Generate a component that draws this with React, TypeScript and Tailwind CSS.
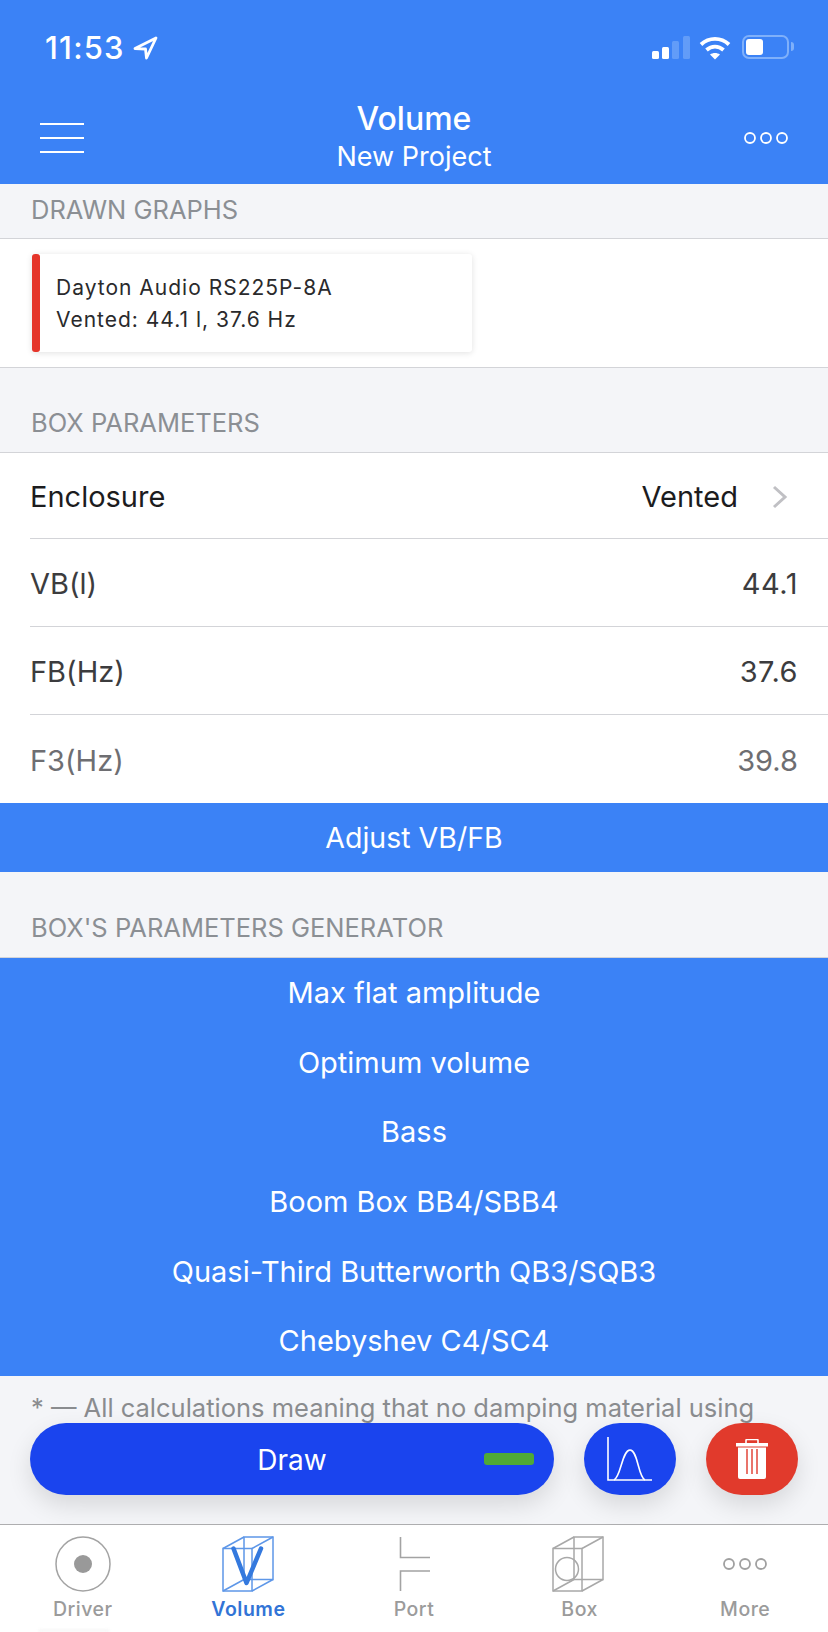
const generators = [
  "Max flat amplitude",
  "Optimum volume",
  "Bass",
  "Boom Box BB4/SBB4",
  "Quasi-Third Butterworth QB3/SQB3",
  "Chebyshev C4/SC4",
];

const params = [
  { label: "VB(l)", value: "44.1", color: "text-[#3c3c3e]" },
  { label: "FB(Hz)", value: "37.6", color: "text-[#3c3c3e]" },
];

function StatusBar() {
  return (
    <div className="flex h-[100px] items-start justify-between pl-[45px] pr-[34px] pt-[33px]">
      <div className="flex items-center gap-[8px]">
        <span className="text-[31px] leading-[30px] font-medium tracking-[1.2px]">11:53</span>
        <svg width="25" height="24" viewBox="0 0 25 24" fill="none" stroke="white" strokeWidth="2.8" strokeLinejoin="round">
          <path d="M23 2 L2 12.5 L12.5 13 L13.5 22 Z" />
        </svg>
      </div>
      <div className="flex items-center">
        <svg width="38" height="24" viewBox="0 0 38 24" className="mr-[9px] mt-[3px]">
          <rect x="0" y="15" width="7" height="8" rx="1.5" fill="white" />
          <rect x="10" y="11" width="7" height="12" rx="1.5" fill="white" />
          <rect x="20" y="5" width="7" height="18" rx="1.5" fill="#629cf8" />
          <rect x="31" y="0" width="7" height="23" rx="1.5" fill="#629cf8" />
        </svg>
        <svg width="32" height="24" viewBox="0 0 32 24" fill="none" stroke="white" strokeWidth="3.8" className="mr-[11px] mt-[2px]">
          <path d="M2 8.5 C10 1 22 1 30 8.5" />
          <path d="M7.5 14 C12.5 9.5 19.5 9.5 24.5 14" />
          <path d="M16 23.5 L11 18.5 C14 16.5 18 16.5 21 18.5 Z" fill="white" stroke="none" />
        </svg>
        <div className="flex items-center">
          <div className="flex h-[24px] w-[47px] items-center rounded-[7px] border-2 border-[#7fb0fa] p-[2px]">
            <div className="h-full w-[17px] rounded-[3px] bg-white" />
          </div>
          <div className="ml-[2px] h-[9px] w-[3px] rounded-r-[3px] bg-[#7fb0fa]" />
        </div>
      </div>
    </div>
  );
}

function NavBar() {
  return (
    <div className="flex items-center justify-between pl-[40px] pr-[40px]">
      <div className="flex w-[44px] flex-col gap-[12px]">
        <div className="h-[2px] bg-white" />
        <div className="h-[2px] bg-white" />
        <div className="h-[2px] bg-white" />
      </div>
      <div className="flex flex-col items-center">
        <div className="text-[32px] leading-[37px] font-medium">Volume</div>
        <div className="text-[27px] leading-[39px]">New Project</div>
      </div>
      <MoreDots color="white" />
    </div>
  );
}

function MoreDots({ color }: { color: string }) {
  return (
    <svg width="44" height="12" viewBox="0 0 44 12" fill="none" stroke={color} strokeWidth="1.8">
      <circle cx="6" cy="6" r="5" />
      <circle cx="22" cy="6" r="5" />
      <circle cx="38" cy="6" r="5" />
    </svg>
  );
}

function SectionLabel({ children, className }: { children: string; className: string }) {
  return (
    <div className={`flex items-end border-b border-[#d3d4d8] bg-[#f4f5f8] pl-[31px] text-[25.5px] text-[#8b8f94] ${className}`}>
      {children}
    </div>
  );
}

function Row({ label, value, color }: { label: string; value: string; color: string }) {
  return (
    <div className="ml-[30px] flex h-[88px] items-center justify-between border-b border-[#d3d4d8] pr-[30px] pt-[3px] text-[29px]">
      <span className={color}>{label}</span>
      <span className={`tracking-[0.5px] ${color}`}>{value}</span>
    </div>
  );
}

function DriverIcon() {
  return (
    <svg width="56" height="56" viewBox="0 0 56 56" fill="none">
      <circle cx="28" cy="28" r="27" stroke="#a3a3a3" strokeWidth="1.5" />
      <circle cx="28" cy="28" r="9" fill="#999999" />
    </svg>
  );
}

function VolumeIcon() {
  return (
    <svg width="52" height="56" viewBox="0 0 52 56" fill="none" stroke="#5e97e8" strokeWidth="1.5">
      <rect x="1" y="12.5" width="29" height="42.5" />
      <rect x="22" y="1" width="29" height="42.5" />
      <path d="M1 12.5 L22 1 M30 12.5 L51 1 M1 55 L22 43.5 M30 55 L51 43.5" />
      <path d="M11.5 12.5 L24.5 47 L39 12.5" strokeWidth="4.5" strokeLinecap="round" strokeLinejoin="round" stroke="#3479de" />
    </svg>
  );
}

function PortIcon() {
  return (
    <svg width="32" height="56" viewBox="0 0 32 56" fill="none" stroke="#a3a3a3" strokeWidth="1.6" className="ml-[3px]">
      <path d="M1.5 1 V21.5 H31" />
      <path d="M1.5 55 V35 H31" />
    </svg>
  );
}

function BoxIcon() {
  return (
    <svg width="52" height="56" viewBox="0 0 52 56" fill="none" stroke="#a8a8a8" strokeWidth="1.5" className="mr-[3px]">
      <rect x="1" y="12.5" width="29" height="42.5" />
      <rect x="22" y="1" width="29" height="42.5" />
      <path d="M1 12.5 L22 1 M30 12.5 L51 1 M1 55 L22 43.5 M30 55 L51 43.5" />
      <circle cx="15" cy="33" r="11.5" />
    </svg>
  );
}

function GraphIcon() {
  return (
    <svg width="46" height="46" viewBox="0 0 46 46" fill="none" stroke="white" strokeWidth="1.6">
      <path d="M1 1 V44 H45" />
      <path d="M7 44 C14 41 15 14 23 14 C31 14 31 41 38 44" />
    </svg>
  );
}

function TrashIcon() {
  return (
    <svg width="32" height="40" viewBox="0 0 32 40" fill="white">
      <path d="M10 4 V1.5 Q10 0.5 11 0.5 H21 Q22 0.5 22 1.5 V4" fill="none" stroke="white" strokeWidth="1.6" />
      <rect x="0" y="4" width="32" height="3.5" />
      <path d="M2 8.5 H30 V38 Q30 40 28 40 H4 Q2 40 2 38 Z" />
      <path d="M11 10 V35 M16 10 V35 M21 10 V35" stroke="#e03a2d" strokeWidth="1.4" fill="none" />
    </svg>
  );
}

function TabItem({ label, active, children }: { label: string; active?: boolean; children: React.ReactNode }) {
  return (
    <div className="flex flex-col items-center">
      <div className="flex h-[56px] items-center justify-center">{children}</div>
      <div className={`mt-[5px] text-[19.5px] leading-[24px] tracking-[0.5px] ${active ? "font-semibold text-[#3274d6]" : "font-medium text-[#9b9b9b]"}`}>
        {label}
      </div>
    </div>
  );
}

export default function App() {
  return (
    <div className="relative flex h-[1632px] w-[828px] flex-col overflow-hidden bg-[#f4f5f8] font-['Inter',sans-serif] text-[#1c1c1e]">
      <div className="h-[184px] bg-[#3b82f6] text-white">
        <StatusBar />
        <NavBar />
      </div>

      <SectionLabel className="h-[55px] pb-[9px]">DRAWN GRAPHS</SectionLabel>
      <div className="h-[129px] border-b border-[#d3d4d8] bg-white pl-[32px] pt-[15px]">
        <div className="flex h-[98px] w-[440px] rounded-[3px] bg-white shadow-[0_1px_6px_rgba(0,0,0,0.12)]">
          <div className="w-[8px] rounded-[3px] bg-[#e5352a]" />
          <div className="flex flex-col justify-center pl-[16px] pt-[2px] text-[21px] leading-[32px] tracking-[1px] text-[#2a2a2c]">
            <div>Dayton Audio RS225P-8A</div>
            <div>Vented: 44.1 l, 37.6 Hz</div>
          </div>
        </div>
      </div>

      <SectionLabel className="h-[85px] pb-[10px]">BOX PARAMETERS</SectionLabel>
      <div className="bg-white">
        <div className="ml-[30px] flex h-[86px] items-center justify-between border-b border-[#d3d4d8] pr-[30px] pt-[3px] text-[29px]">
          <span>Enclosure</span>
          <span className="flex items-center gap-[34px]">
            Vented
            <svg width="16" height="24" viewBox="0 0 16 24" fill="none" stroke="#c0c0c4" strokeWidth="3" className="mr-[10px]">
              <path d="M2 2 L13 12 L2 22" />
            </svg>
          </span>
        </div>
        {params.map((p) => (
          <Row key={p.label} label={p.label} value={p.value} color={p.color} />
        ))}
        <div className="ml-[30px] flex h-[88px] items-center justify-between pr-[30px] pt-[3px] text-[29px] text-[#6e6e72]">
          <span>F3(Hz)</span>
          <span>39.8</span>
        </div>
      </div>
      <div className="flex h-[69px] items-center justify-center bg-[#3b82f6] pt-[1px] text-[28.5px] text-white">Adjust VB/FB</div>

      <SectionLabel className="h-[86px] pb-[10px]">BOX'S PARAMETERS GENERATOR</SectionLabel>
      <div className="flex h-[418px] flex-col bg-[#3b82f6] text-white">
        {generators.map((g) => (
          <div key={g} className="flex h-[70px] items-center justify-center text-[29px]">{g}</div>
        ))}
      </div>

      <div className="flex-1 pl-[31px] pt-[16px] text-[25.5px] leading-[32px] text-[#8a8c8f]">
        * — All calculations meaning that no damping material using
      </div>

      <div className="flex h-[108px] items-start justify-around border-t border-[#aeaeb0] bg-white pt-[11px]">
        <div className="grid w-full grid-cols-5">
          <TabItem label="Driver"><DriverIcon /></TabItem>
          <TabItem label="Volume" active><VolumeIcon /></TabItem>
          <TabItem label="Port"><PortIcon /></TabItem>
          <TabItem label="Box"><BoxIcon /></TabItem>
          <TabItem label="More"><MoreDots color="#a0a0a0" /></TabItem>
        </div>
      </div>

      {/* floating actions */}
      <div className="absolute left-[30px] top-[1423px] flex gap-[30px]">
        <div className="relative flex h-[72px] w-[524px] items-center justify-center rounded-full bg-[#1a44ee] pt-[1px] text-[28px] text-white shadow-[0_10px_24px_rgba(0,0,0,0.12)]">
          Draw
          <div className="absolute right-[20px] top-[30px] h-[12px] w-[50px] rounded-[3px] bg-[#4fa935]" />
        </div>
        <div className="flex h-[72px] w-[92px] items-center justify-center rounded-full bg-[#1a44ee] shadow-[0_10px_24px_rgba(0,0,0,0.12)]">
          <GraphIcon />
        </div>
        <div className="flex h-[72px] w-[92px] items-center justify-center rounded-full bg-[#e13a2c] shadow-[0_10px_24px_rgba(0,0,0,0.12)]">
          <TrashIcon />
        </div>
      </div>

      {/* faint smudge along the bottom edge */}
      <div className="absolute bottom-0 left-[38px] h-[3px] w-[72px] rounded-t-full bg-[#f7f7f7] blur-[1px]" />
    </div>
  );
}
